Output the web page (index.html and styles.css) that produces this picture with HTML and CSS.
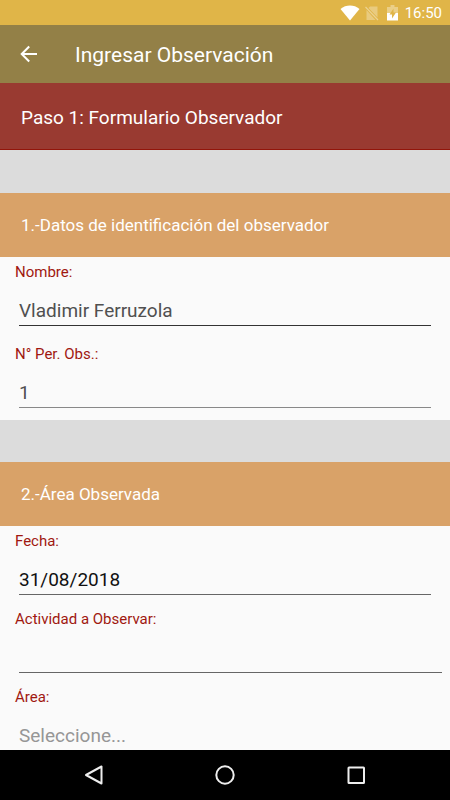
FILE: index.html
```html
<!DOCTYPE html>
<html lang="es">
<head>
<meta charset="utf-8">
<meta name="viewport" content="width=device-width, initial-scale=1">
<title>Ingresar Observación</title>
<link rel="stylesheet" href="styles.css">
</head>
<body>
<div class="status">
  <svg class="wifi" viewBox="0 0 20 16" aria-hidden="true"><path d="M.5 4C6-.6 14-.6 19.500 4L10 15.500z" fill="#fff"/></svg>
  <svg class="sim" viewBox="0 0 14 16" aria-hidden="true"><path d="M5 1.500h7.500v11L3.500 3zM1.500 5l9 10h-9z" fill="#fff" opacity=".3"/><path d="M.5 2l12.500 13" stroke="#fff" stroke-width="1.200" opacity=".4"/></svg>
  <svg class="battery" viewBox="0 0 12 16" aria-hidden="true"><path d="M3.500 0h4v2H11v6H0V2h3.500z" fill="#fff" opacity=".35"/><path d="M0 8h11v7.500H0z" fill="#fff"/><path d="M6.500 3.500L2.500 9.500H5v4l4-6H6.500z" fill="#e0b548"/></svg>
  <span>16:50</span>
</div>
<header class="appbar">
  <button class="back" type="button" aria-label="Volver">
    <svg viewBox="0 0 18 18" aria-hidden="true"><path d="M17 9H2M9.200 1.500L1.700 9l7.500 7.500" fill="none" stroke="#fff" stroke-width="2"/></svg>
  </button>
  <h1>Ingresar Observación</h1>
</header>
<main>
  <h2 class="step">Paso 1: Formulario Observador</h2>
  <form>
    <section>
      <h3>1.-Datos de identificación del observador</h3>
      <div class="fields">
        <div class="field">
          <label for="nombre">Nombre:</label>
          <input class="strong" id="nombre" type="text" value="Vladimir Ferruzola">
        </div>
        <div class="field">
          <label for="personas">N° Per. Obs.:</label>
          <input class="soft" id="personas" type="text" value="1">
        </div>
      </div>
    </section>
    <section>
      <h3>2.-Área Observada</h3>
      <div class="fields compact">
        <div class="field">
          <label for="fecha">Fecha:</label>
          <input class="date" id="fecha" type="text" value="31/08/2018">
        </div>
        <div class="field wide">
          <label for="actividad">Actividad a Observar:</label>
          <input id="actividad" type="text">
        </div>
        <div class="field wide">
          <label for="area">Área:</label>
          <input id="area" type="text" placeholder="Seleccione...">
        </div>
      </div>
    </section>
  </form>
</main>
<nav class="system">
  <button type="button" aria-label="Atrás"><svg viewBox="0 0 20 20" aria-hidden="true"><path d="M17.500 1.500v17L2 10z" stroke-linejoin="round"/></svg></button>
  <button type="button" aria-label="Inicio"><svg viewBox="0 0 20 20" aria-hidden="true"><circle cx="10" cy="10" r="8.700"/></svg></button>
  <button type="button" aria-label="Recientes"><svg viewBox="0 0 20 20" aria-hidden="true"><rect x="2.500" y="2.500" width="15.500" height="15.500" rx=".5"/></svg></button>
</nav>
</body>
</html>
```

FILE: styles.css
```css
* {
  box-sizing: border-box;
}

body {
  display: flex;
  flex-direction: column;
  height: 100vh;
  margin: 0;
  background: #fafafa;
  color: #fff;
  font-family: Roboto, "Liberation Sans", sans-serif;
}

h1, h2, h3 {
  margin: 0;
  font-weight: 400;
}

button {
  display: flex;
  align-items: center;
  justify-content: center;
  padding: 0;
  border: 0;
  background: none;
}

.status {
  display: flex;
  flex: none;
  align-items: center;
  justify-content: flex-end;
  height: 25px;
  padding-right: 8px;
  background: #e0b548;
  font-size: 15px;
}

.wifi {
  width: 20px;
  height: 16px;
  margin-right: 5px;
}

.sim {
  width: 14px;
  height: 16px;
  margin-right: 8px;
}

.battery {
  width: 12px;
  height: 16px;
  margin-right: 6px;
}

.appbar {
  display: flex;
  flex: none;
  align-items: center;
  height: 58px;
  padding-left: 9px;
  background: #938047;
}

.back {
  width: 40px;
  height: 40px;
}

.back svg {
  width: 18px;
  height: 18px;
}

h1 {
  padding-top: 2px;
  margin-left: 26px;
  font-size: 21px;
  line-height: 28px;
}

main {
  flex: 1;
  min-height: 0;
  overflow: hidden;
}

.step {
  padding: 23px 21px 19px;
  border-bottom: 1px solid #92150a;
  background: #993a31;
  font-size: 19px;
  line-height: 24px;
}

section {
  border-top: 42px solid #dcdcdc;
}

.step + form {
  border-top: 1px solid #dcdcdc;
}

h3 {
  padding: 20px 21px;
  background: #d9a268;
  font-size: 17px;
  line-height: 24px;
}

.fields {
  display: flex;
  flex-direction: column;
  gap: 13px;
  padding: 0 19px 12px 15px;
}

.compact {
  gap: 9px;
}

.field {
  display: flex;
  flex-direction: column;
  padding-top: 5px;
}

.wide {
  margin-right: -11px;
}

label {
  color: #a01810;
  font-size: 15px;
  line-height: 20px;
}

input {
  height: 44px;
  min-width: 0;
  margin-left: 4px;
  padding: 14px 0 0;
  border: 0;
  border-bottom: 1px solid #666;
  border-radius: 0;
  outline: 0;
  background: none;
  color: #505050;
  font: 19px Roboto, "Liberation Sans", sans-serif;
}

input::placeholder {
  color: #969696;
  opacity: 1;
}

.strong {
  border-color: #333;
}

.soft {
  border-color: #888;
}

.date {
  color: #111;
}

.system {
  display: flex;
  flex: none;
  align-items: center;
  justify-content: center;
  gap: 12%;
  height: 50px;
  background: #000;
}

.system button {
  width: 77px;
  height: 50px;
}

.system svg {
  width: 20px;
  height: 20px;
  fill: none;
  stroke: #eee;
  stroke-width: 2;
}
```
